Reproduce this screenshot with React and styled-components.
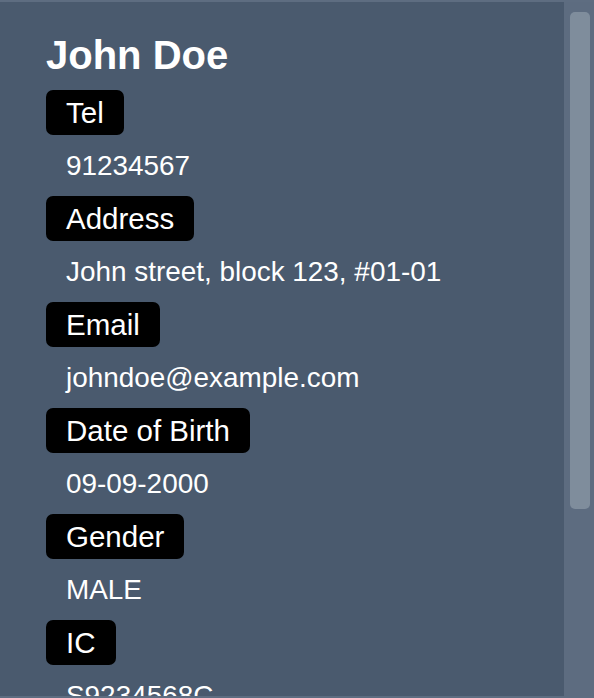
import styled, { createGlobalStyle } from "styled-components";

const GlobalStyle = createGlobalStyle`
  html, body {
    margin: 0;
    padding: 0;
    background: #4a5a6e;
  }
  body {
    font-family: "Liberation Sans", Arial, sans-serif;
  }
`;

const Frame = styled.div`
  box-sizing: border-box;
  height: 100vh;
  display: flex;
  background: #4a5a6e;
  border-top: 2px solid #5e6d81;
  border-bottom: 2px solid #5e6d81;
  overflow: hidden;
`;

const Content = styled.div`
  flex: 1;
  min-width: 0;
  overflow: hidden;
  padding: 30px 46px 0;
  color: #fff;
`;

const ScrollTrack = styled.div`
  flex: 0 0 30px;
  background: #5d6c80;
  padding: 10px 4px 0 6px;
  box-sizing: border-box;
`;

const Thumb = styled.div`
  height: 497px;
  background: #7f8d9c;
  border-radius: 5px;
`;

const Name = styled.h1`
  margin: 0 0 12px;
  font-size: 40px;
  line-height: 46px;
  font-weight: 700;
`;

const Field = styled.section`
  display: flex;
  flex-direction: column;
  align-items: flex-start;
`;

const Tag = styled.div`
  background: #000;
  color: #fff;
  border-radius: 7px;
  padding: 6px 20px;
  font-size: 29.5px;
  line-height: 33px;
`;

const Value = styled.div`
  padding: 15px 20px;
  font-size: 27.9px;
  line-height: 31px;
  white-space: nowrap;
`;

const fields = [
  { label: "Tel", value: "91234567" },
  { label: "Address", value: "John street, block 123, #01-01" },
  { label: "Email", value: "johndoe@example.com" },
  { label: "Date of Birth", value: "09-09-2000" },
  { label: "Gender", value: "MALE" },
  { label: "IC", value: "S9234568C" },
  { label: "Nationality", value: "SINGAPOREAN" },
  { label: "Occupation", value: "Engineer" },
];

const App = () => {
  return (
    <>
      <GlobalStyle />
      <Frame>
        <Content>
          <Name>John Doe</Name>
          {fields.map((f) => (
            <Field key={f.label}>
              <Tag>{f.label}</Tag>
              <Value>{f.value}</Value>
            </Field>
          ))}
        </Content>
        <ScrollTrack>
          <Thumb />
        </ScrollTrack>
      </Frame>
    </>
  );
};

export default App;
